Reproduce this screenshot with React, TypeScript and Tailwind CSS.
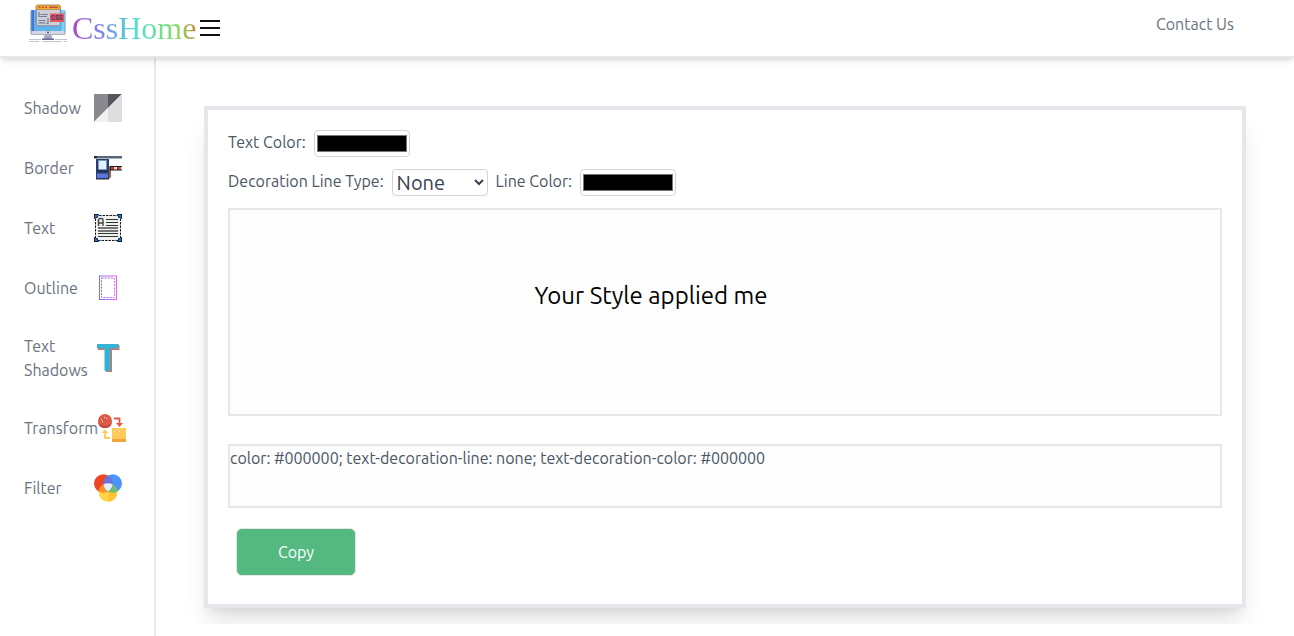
import { useState } from "react";
import type { ReactNode } from "react";

function LogoIcon() {
  return (
    <svg viewBox="0 0 40 40" className="mb-3 size-10 shrink-0" aria-hidden="true">
      <rect x="2.500" y="8" width="35" height="25" rx="2" fill="#8a8ba6" />
      <rect x="3.500" y="8" width="33" height="21" fill="#5fb4e8" />
      <path d="M3.500 8h2.500v21H3.500z" fill="#4c73d6" />
      <path d="M33.500 8h3v21h-3z" fill="#72d8f5" />
      <path d="M3.500 29h33v3.500h-33z" fill="#d5d5e3" />
      <circle cx="20" cy="30.500" r="1" fill="#4c5277" />
      <path d="M16.500 33h7l1 4h-9z" fill="#a4a8c4" />
      <path d="M14 36.500h12V38H14z" fill="#646a8e" />
      <path d="M1 37.500h12M27 37.500h12M1 39.500h10M14 39.500h20M36 39.500h3" stroke="#b4b6c8" strokeWidth=".8" />
      <rect x="8.300" y="3.300" width="24" height="20.500" rx="1.500" fill="#cfcfd6" stroke="#777a9a" strokeWidth=".8" />
      <path d="M8 7.500v-3Q8 3 9.500 3h21.500q1.500 0 1.500 1.500v3z" fill="#f7a92c" stroke="#9b7960" strokeWidth=".6" />
      <path d="M10.500 5.300h2m1.300 0h2m1.300 0h2m2 0h9" stroke="#b9573f" strokeWidth="1.500" />
      <path d="M11 10v4.500h8M12.500 12.500H20M10.500 18.500h7M10.500 20.800h7M20 16v5.500h-1.500" stroke="#777b9c" strokeWidth="1.200" fill="none" />
      <rect x="22" y="11.500" width="14" height="8.500" fill="#df5967" />
      <text x="23" y="18" fontSize="6.500" fontWeight="700" fill="#4a3058" fontFamily="Liberation Mono, monospace">CSS</text>
    </svg>
  );
}

function ShadowIcon() {
  return (
    <svg viewBox="0 0 28 28" className="size-7" aria-hidden="true">
      <path d="M0 0h14v14L0 28z" fill="#898a8f" />
      <path d="M14 0h14L14 14z" fill="#57565c" />
      <path d="M28 0v28H14V14z" fill="#dedee0" />
      <path d="M14 14v14H0z" fill="#f2f1f2" />
    </svg>
  );
}

function BorderIcon() {
  return (
    <svg viewBox="0 0 28 28" className="size-7" aria-hidden="true">
      <path d="M0 2h28v2.500H0z" fill="#56677a" />
      <path d="M0 2h3v2H0z" fill="#1c2638" />
      <path d="M2 5h13v20H2z" fill="#283f6c" />
      <path d="M3 19.500h11V24H3z" fill="#5977dc" />
      <path d="M4.500 6.500h8v9h-8z" fill="#e2effc" stroke="#7899cb" />
      <path d="M3 16h11v2H3z" fill="#233153" />
      <path d="M2 24h13v1.500H2z" fill="#28344f" />
      <path d="M15 12l2 2v9l-2 2z" fill="#92624d" />
      <path d="M16 12h12v4.500H16z" fill="#171c23" />
      <path d="M17 13h2.500v2.500H17zm6.500 0H26v2.500h-2.500z" fill="#f43b20" />
      <path d="M20 13h3v2.500h-3zm6.500 0H28v2.500h-1.500z" fill="#eee5dc" />
    </svg>
  );
}

function TextIcon() {
  return (
    <svg viewBox="0 0 28 28" className="size-7" aria-hidden="true">
      <rect x="1.500" y="1.500" width="25" height="25" fill="#f1f1f1" stroke="#15181c" strokeDasharray="2.500 1" />
      <path d="M4.500 12V6q0-1.500 1.500-1.500h1.500Q9 4.500 9 6v6M4.500 9H9" fill="none" stroke="#444" strokeWidth="1.400" />
      <path d="M12 5.500h12M12 8.500h12M12 11.500h12M4 19.500h20M4 22.500h20" stroke="#303730" />
      <path d="M4 14h20M4 17h20" stroke="#777" strokeWidth="1.800" />
      <path d="M0 0h5L4 3 3 4 0 5zM28 0v5l-3-1-1-1-1-3zM0 28v-5l3 1 1 1 1 3zM28 28h-5l1-3 1-1 3-1z" fill="#16202e" />
      <path d="M1 1h3.500L1 4.500zM27 1v3.500L23.500 1zM1 27v-3.500L4.500 27zM27 27h-3.500l3.500-3.500z" fill="#2875c9" />
    </svg>
  );
}

function OutlineIcon() {
  return (
    <svg viewBox="0 0 28 28" className="size-7" aria-hidden="true">
      <defs>
        <linearGradient id="outline-stroke">
          <stop stopColor="#806cf0" />
          <stop offset="1" stopColor="#df67f5" />
        </linearGradient>
      </defs>
      <rect x="5.500" y="2" width="17" height="23.500" fill="none" stroke="url(#outline-stroke)" />
      <rect x="7.500" y="4" width="13" height="19.500" fill="none" stroke="url(#outline-stroke)" strokeDasharray="2 1.200" />
    </svg>
  );
}

function TextShadowIcon() {
  return (
    <svg viewBox="0 0 28 28" className="size-7" aria-hidden="true">
      <path d="M4 1h21.500v5H18v22h-6V6H4z" fill="#e06c66" />
      <path d="M3 0h21.500v4.500h-8V27H10.500V4.500H3z" fill="#35b3d5" />
    </svg>
  );
}

function TransformIcon() {
  return (
    <svg viewBox="0 0 28 28" className="size-7 shrink-0" aria-hidden="true">
      <circle cx="7" cy="7" r="7" fill="#df5944" />
      <path d="M0 8q1 6 7 6t7-6q-2 4-7 4T0 8z" fill="#bd4339" />
      <path d="M3 5h1v1H3zm3-2h1v1H6zm2 1h1v1H8zM4 7h1v1H4z" fill="#fff0e8" />
      <path d="M14 14h14v14H14z" fill="#ffca57" />
      <path d="M14 25h14v3H14z" fill="#f4a43c" />
      <path d="M16 17h1v1h-1zm3-1h1v1h-1zm2 1h1v1h-1zm-5 3h1v1h-1z" fill="#fff4dc" />
      <path d="M16 4.500h5.500V9" fill="none" stroke="#df5944" strokeWidth="1.800" />
      <path d="M18 9h7l-3.500 4z" fill="#df5944" />
      <path d="M12 24H7v-5" fill="none" stroke="#ffca57" strokeWidth="1.800" />
      <path d="M3.500 19L7 15.500l3.500 3.500z" fill="#ffca57" />
    </svg>
  );
}

function FilterIcon() {
  return (
    <svg viewBox="0 0 28 28" className="size-7" aria-hidden="true">
      <defs>
        <clipPath id="filter-red"><circle cx="9.300" cy="9.500" r="9.300" /></clipPath>
        <clipPath id="filter-blue"><circle cx="18.700" cy="9.500" r="9.300" /></clipPath>
      </defs>
      <circle cx="9.300" cy="9.500" r="9.300" fill="#f04427" />
      <circle cx="18.700" cy="9.500" r="9.300" fill="#4c94fa" />
      <circle cx="14" cy="18.500" r="9.300" fill="#ffd447" />
      <path d="M14 9.200a9.300 9.300 0 010 18.600z" fill="#ffc333" />
      <g clipPath="url(#filter-red)">
        <circle cx="14" cy="18.500" r="9.300" fill="#ff8f28" />
        <circle cx="18.700" cy="9.500" r="9.300" fill="#6d72dc" />
      </g>
      <g clipPath="url(#filter-blue)">
        <circle cx="14" cy="18.500" r="9.300" fill="#6abf73" />
        <g clipPath="url(#filter-red)">
          <path d="M9 0h10v10H9z" fill="#6d72dc" />
          <circle cx="14" cy="18.500" r="9.300" fill="#e5f0fb" />
        </g>
      </g>
    </svg>
  );
}

const links: { label: string; icon: ReactNode }[] = [
  { label: "Shadow", icon: <ShadowIcon /> },
  { label: "Border", icon: <BorderIcon /> },
  { label: "Text", icon: <TextIcon /> },
  { label: "Outline", icon: <OutlineIcon /> },
  { label: "Text Shadows", icon: <TextShadowIcon /> },
  { label: "Transform", icon: <TransformIcon /> },
  { label: "Filter", icon: <FilterIcon /> },
];

const lineTypes = ["none", "underline", "overline", "line-through"];

const control = "h-[27px] w-24 rounded border border-[#d1d5db] bg-white";

export default function App() {
  const [color, setColor] = useState("#000000");
  const [lineColor, setLineColor] = useState("#000000");
  const [line, setLine] = useState("none");
  const css = `color: ${color}; text-decoration-line: ${line}; text-decoration-color: ${lineColor}`;

  return (
    <div className="flex min-h-screen flex-col bg-white font-[Ubuntu,'Noto_Sans',sans-serif] text-base text-[#4b5563]">
      <header className="relative flex h-[58px] items-center justify-between border-b-2 border-[#e5e7eb] bg-white pr-15 pl-7 shadow-md">
        <div className="flex items-center">
          <a href="#" className="flex items-center gap-1">
            <LogoIcon />
            <span className="bg-[linear-gradient(90deg,#ae4bc9,#7a8be5_25%,#50dfd5_50%,#88df65_85%,#c58b42)] bg-clip-text font-['Liberation_Serif',serif] text-[32px] leading-10 text-transparent">
              CssHome
            </span>
          </a>
          <button type="button" aria-label="Menu" className="ml-1">
            <svg viewBox="0 0 20 16" className="h-4 w-5" aria-hidden="true">
              <path d="M0 1h20M0 8h20M0 15h20" stroke="#111" strokeWidth="1.800" />
            </svg>
          </button>
        </div>
        <a href="#contact" className="mb-2 text-[#6b7280]">Contact Us</a>
      </header>

      <div className="flex grow">
        <nav className="w-39 shrink-0 border-r-2 border-[#e5e7eb] px-6 pt-5 text-[#6b7280]">
          <ul>
            {links.map(({ label, icon }) => (
              <li key={label}>
                <a href="#" className="flex items-center py-4">
                  <span className="w-min min-w-[70px]">{label}</span>
                  {icon}
                </a>
              </li>
            ))}
          </ul>
        </nav>

        <main className="min-w-0 grow px-8 pt-8 pb-3">
          <div className="overflow-hidden p-4">
            <section className="border-4 border-[#e5e7eb] bg-white p-5 pb-7 shadow-xl">
              <div className="flex items-start gap-2">
                <label htmlFor="text-color">Text Color:</label>
                <input id="text-color" type="color" value={color} onChange={(e) => setColor(e.target.value)} className={control} />
              </div>
              <div className="mt-3 flex items-start gap-2">
                <label htmlFor="line-type">Decoration Line Type:</label>
                <select id="line-type" value={line} onChange={(e) => setLine(e.target.value)} className={`${control} text-xl leading-6 text-[#374151]`}>
                  {lineTypes.map((type) => (
                    <option key={type} value={type}>{type[0].toUpperCase() + type.slice(1)}</option>
                  ))}
                </select>
                <label htmlFor="line-color">Line Color:</label>
                <input id="line-color" type="color" value={lineColor} onChange={(e) => setLineColor(e.target.value)} className={control} />
              </div>
              <div className="mt-3 h-52 border-2 border-[#e5e7eb] bg-[#fdfdfd] pt-[70px] pr-37 text-center text-2xl">
                <p style={{ color, textDecorationLine: line, textDecorationColor: lineColor }}>Your Style applied me</p>
              </div>
              <div className="mt-7 h-16 border-2 border-[#e5e7eb] bg-[#fdfdfd]">{css}</div>
              <button type="button" onClick={() => navigator.clipboard?.writeText(css)} className="mt-5 ml-2 block h-12 w-30 rounded-md border border-[#e5e7eb] bg-[#53b981] text-white">
                Copy
              </button>
            </section>
          </div>
        </main>
      </div>
    </div>
  );
}
